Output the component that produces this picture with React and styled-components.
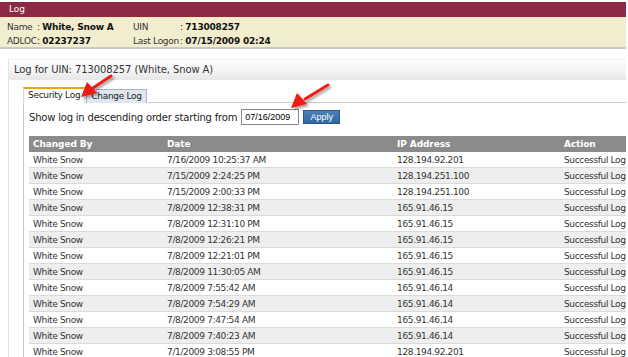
import React from "react"
import styled, { createGlobalStyle } from "styled-components"

const GlobalStyle = createGlobalStyle`
  html, body {
    margin: 0;
    padding: 0;
    background: #fff;
  }
  body {
    font-family: "DejaVu Sans", Verdana, sans-serif;
    color: #222;
  }
`

const rows = [
  ["7/16/2009 10:25:37 AM", "128.194.92.201"],
  ["7/15/2009 2:24:25 PM", "128.194.251.100"],
  ["7/15/2009 2:00:33 PM", "128.194.251.100"],
  ["7/8/2009 12:38:31 PM", "165.91.46.15"],
  ["7/8/2009 12:31:10 PM", "165.91.46.15"],
  ["7/8/2009 12:26:21 PM", "165.91.46.15"],
  ["7/8/2009 12:21:01 PM", "165.91.46.15"],
  ["7/8/2009 11:30:05 AM", "165.91.46.15"],
  ["7/8/2009 7:55:42 AM", "165.91.46.14"],
  ["7/8/2009 7:54:29 AM", "165.91.46.14"],
  ["7/8/2009 7:47:54 AM", "165.91.46.14"],
  ["7/8/2009 7:40:23 AM", "165.91.46.14"],
  ["7/1/2009 3:08:55 PM", "128.194.92.201"],
]

export default function App() {
  return (
    <>
      <GlobalStyle />
      <Page>
        <TitleBar>Log</TitleBar>
        <InfoBar>
          <InfoLabel>Name</InfoLabel>
          <InfoValue>: <b>White, Snow A</b></InfoValue>
          <InfoLabel>UIN</InfoLabel>
          <InfoValue>: <b>713008257</b></InfoValue>
          <InfoLabel>ADLOC</InfoLabel>
          <InfoValue>: <b>02237237</b></InfoValue>
          <InfoLabel>Last Logon</InfoLabel>
          <InfoValue>: <b>07/15/2009 02:24</b></InfoValue>
        </InfoBar>

        <Panel>
          <PanelHeader>Log for UIN: 713008257 (White, Snow A)</PanelHeader>
          <PanelBody>
            <Tabs>
              <Tab $active>Security Log</Tab>
              <Tab>Change Log</Tab>
              <TabFill />
            </Tabs>
            <TabBody>
              <FilterRow>
                Show log in descending order starting from
                <DateInput defaultValue="07/16/2009" />
                <ApplyButton>Apply</ApplyButton>
              </FilterRow>
              <Table>
                <colgroup>
                  <col style={{ width: 134 }} />
                  <col style={{ width: 230 }} />
                  <col style={{ width: 167 }} />
                  <col style={{ width: 120 }} />
                </colgroup>
                <thead>
                  <tr>
                    <Th>Changed By</Th>
                    <Th>Date</Th>
                    <Th>IP Address</Th>
                    <Th>Action</Th>
                  </tr>
                </thead>
                <tbody>
                  {rows.map(([date, ip], i) => (
                    <Row key={i} $alt={i % 2 === 1}>
                      <Td>White Snow</Td>
                      <Td>{date}</Td>
                      <Td>{ip}</Td>
                      <Td>Successful Logon</Td>
                    </Row>
                  ))}
                </tbody>
              </Table>
            </TabBody>
          </PanelBody>
        </Panel>

        <Arrows width="628" height="357" viewBox="0 0 628 357">
          <defs>
            <filter id="sh" x="-30%" y="-30%" width="160%" height="160%">
              <feDropShadow dx="2" dy="2" stdDeviation="1.3" floodColor="#000" floodOpacity="0.35" />
            </filter>
          </defs>
          <g filter="url(#sh)" fill="#ec1c12" stroke="#ec1c12" strokeLinecap="round">
            <line x1="111" y1="76" x2="93" y2="88" strokeWidth="3" />
            <polygon points="81,97 87,82 97,93" stroke="none" />
            <line x1="328" y1="85" x2="305" y2="99" strokeWidth="3" />
            <polygon points="291,108 297,93 307,104" stroke="none" />
          </g>
        </Arrows>
      </Page>
    </>
  )
}

const Page = styled.div`
  position: relative;
  width: 626px;
  height: 357px;
  overflow: hidden;
  padding-top: 2px;
  box-sizing: border-box;
`

const TitleBar = styled.div`
  height: 15px;
  background: #8c2a45;
  color: #fff;
  font-size: 9px;
  line-height: 15px;
  padding-left: 9px;
`

const InfoBar = styled.div`
  display: grid;
  grid-template-columns: 30px 96px 47px auto;
  grid-auto-rows: 14px;
  align-items: center;
  background: #f3edd0;
  border-top: 1px solid #f8e8c0;
  border-bottom: 2px solid #c9c9c6;
  padding: 2px 7px 1px;
  box-sizing: border-box;
  height: 32px;
  font-size: 9px;
  letter-spacing: -0.3px;
  color: #333;
`

const InfoLabel = styled.span`
  white-space: nowrap;
`

const InfoValue = styled.span`
  white-space: nowrap;
  b {
    color: #111;
    letter-spacing: -0.2px;
  }
`

const Panel = styled.div`
  margin: 10px 0 0 8px;
  border-left: 1px solid #e2e2e2;
`

const PanelHeader = styled.div`
  height: 20px;
  line-height: 20px;
  padding-left: 5px;
  font-size: 10px;
  letter-spacing: -0.1px;
  color: #333;
  background: linear-gradient(#fdfdfd, #f4f4f4 55%, #e6e6e6);
  border-top: 1px solid #f0f0f0;
`

const PanelBody = styled.div`
  padding: 9px 0 0 14px;
`

const Tabs = styled.div`
  display: flex;
  align-items: flex-end;
  height: 14px;
`

const Tab = styled.div`
  height: 13px;
  line-height: 13px;
  padding: 0 4px;
  font-size: 9px;
  letter-spacing: -0.3px;
  color: #222;
  border: 1px solid #a9b4c4;
  border-bottom: none;
  margin-right: 1px;
  background: ${(p) => (p.$active ? "#fff" : "#dfe6ef")};
  border-top: ${(p) => (p.$active ? "2px solid #f0a21c" : "1px solid #a9b4c4")};
  ${(p) => p.$active && "border-color: #d9d9d9; border-top-color: #f0a21c; height: 14px;"}
`

const TabFill = styled.div`
  flex: 1;
  border-bottom: 1px solid #c8c8c8;
`

const TabBody = styled.div`
  border-left: 1px solid #c8c8c8;
  padding: 5px 0 0 5px;
`

const FilterRow = styled.div`
  display: flex;
  align-items: center;
  height: 18px;
  font-size: 10px;
  letter-spacing: -0.2px;
  color: #222;
`

const DateInput = styled.input`
  width: 50px;
  height: 12px;
  margin: 0 0 0 4px;
  padding: 1px 3px;
  border: 1px solid #888;
  font-family: "Liberation Sans", Arial, sans-serif;
  font-size: 9px;
  letter-spacing: 0;
  color: #000;
`

const ApplyButton = styled.button`
  margin-left: 4px;
  height: 14px;
  width: 37px;
  padding: 0;
  border: 1px solid #2c5a8c;
  background: linear-gradient(#4c80bb, #3266a2);
  color: #fff;
  font-family: "Liberation Sans", Arial, sans-serif;
  font-size: 9px;
  letter-spacing: 0;
`

const Table = styled.table`
  margin-top: 10px;
  border-collapse: collapse;
  table-layout: fixed;
  width: 651px;
  font-size: 9px;
  letter-spacing: -0.35px;
`

const Th = styled.th`
  height: 16px;
  padding: 0 4px;
  text-align: left;
  background: #8b8b8b;
  color: #fff;
  font-weight: bold;
  letter-spacing: -0.1px;
  white-space: nowrap;
`

const Row = styled.tr`
  background: ${(p) => (p.$alt ? "#eeeeee" : "#fff")};
  border-bottom: 1px solid #dadada;
`

const Td = styled.td`
  height: 15px;
  padding: 0 4px;
  color: #333;
  white-space: nowrap;
`

const Arrows = styled.svg`
  position: absolute;
  left: 0;
  top: 0;
  pointer-events: none;
`
